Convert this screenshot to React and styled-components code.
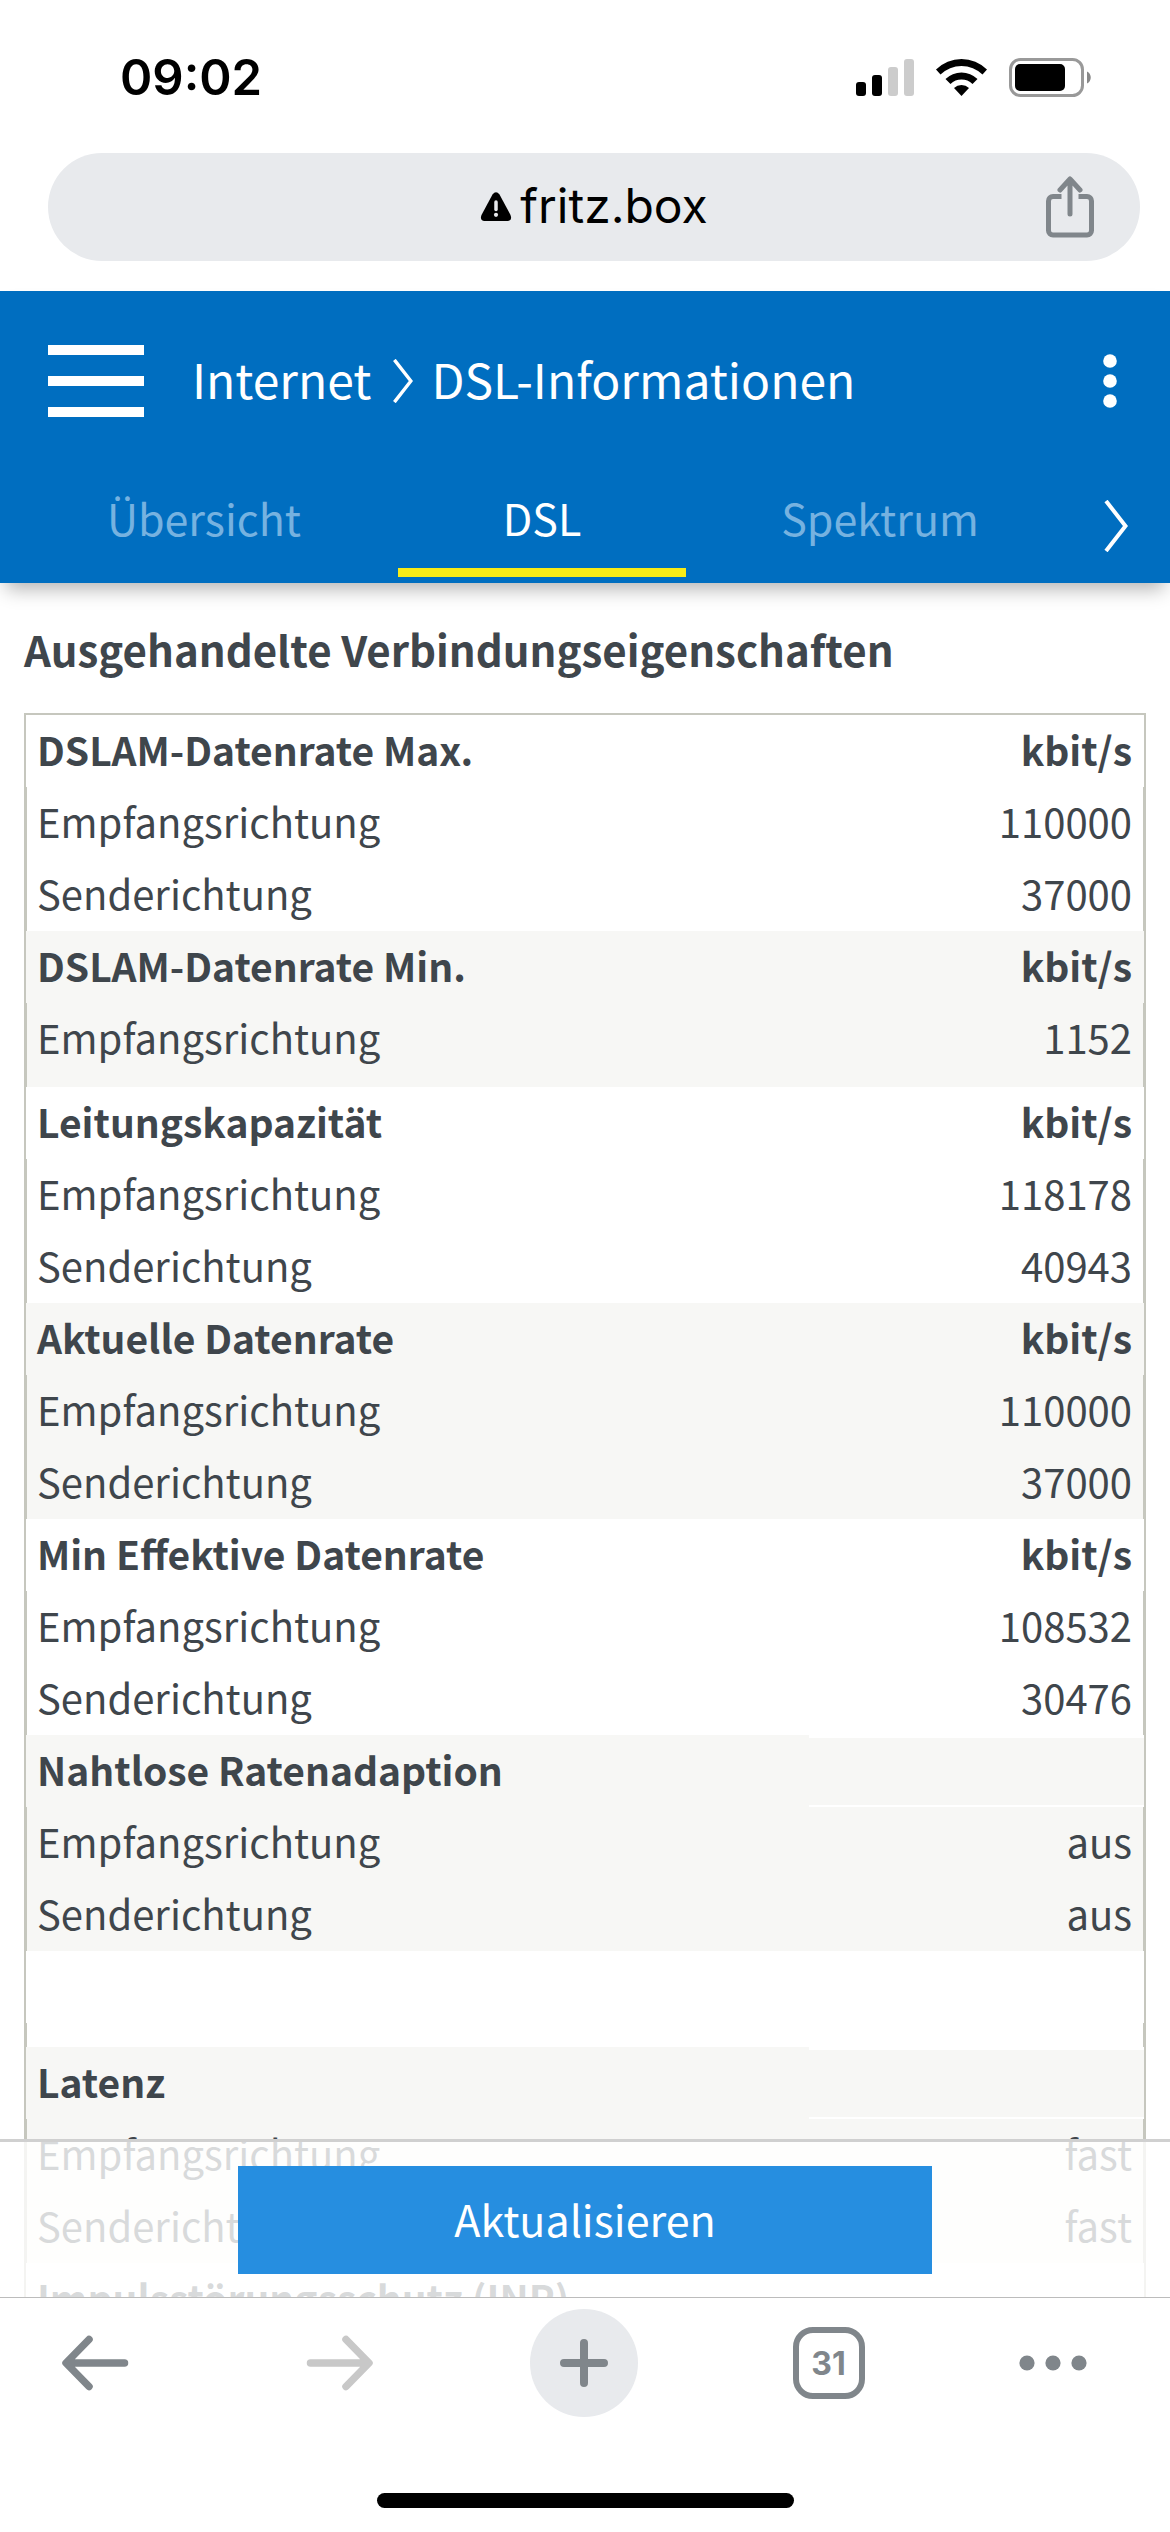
import React from "react";
import styled, { createGlobalStyle } from "styled-components";

const groups = [
	{
		title: "DSLAM-Datenrate Max.",
		unit: "kbit/s",
		rows: [
			["Empfangsrichtung", "110000"],
			["Senderichtung", "37000"],
		],
	},
	{
		title: "DSLAM-Datenrate Min.",
		unit: "kbit/s",
		shaded: true,
		rows: [["Empfangsrichtung", "1152"]],
		spaced: true,
	},
	{
		title: "Leitungskapazität",
		unit: "kbit/s",
		rows: [
			["Empfangsrichtung", "118178"],
			["Senderichtung", "40943"],
		],
	},
	{
		title: "Aktuelle Datenrate",
		unit: "kbit/s",
		shaded: true,
		rows: [
			["Empfangsrichtung", "110000"],
			["Senderichtung", "37000"],
		],
	},
	{
		title: "Min Effektive Datenrate",
		unit: "kbit/s",
		rows: [
			["Empfangsrichtung", "108532"],
			["Senderichtung", "30476"],
		],
	},
	{
		title: "Nahtlose Ratenadaption",
		shaded: true,
		rows: [
			["Empfangsrichtung", "aus"],
			["Senderichtung", "aus"],
		],
	},
	{ rows: [], divider: true },
	{
		title: "Latenz",
		shaded: true,
		rows: [
			["Empfangsrichtung", "fast"],
			["Senderichtung", "fast"],
		],
	},
	{ title: "Impulsstörungsschutz (INP)", rows: [] },
];

const StatusIcons = () => (
	<svg width="236" height="40" viewBox="0 0 236 40" aria-hidden="true">
		<rect x="0" y="24" width="10" height="14" rx="3" />
		<rect x="16" y="17" width="10" height="21" rx="3" />
		<rect x="32" y="9" width="10" height="29" rx="3" fill="#ccc" />
		<rect x="48" y="1" width="10" height="37" rx="3" fill="#ccc" />
		<path d="M80 11.5a36 36 0 0 1 51 0l-4.5 5a30 30 0 0 0-42 0z" />
		<path d="M89.500 21a23 23 0 0 1 32 0l-5 5a16 16 0 0 0-22 0z" />
		<path d="M98 30a11 11 0 0 1 15 0l-7.500 8z" />
		<rect x="154.500" y="1.500" width="72" height="36" rx="10" fill="none" stroke="#999" strokeWidth="3" />
		<rect x="159" y="6" width="50" height="27" rx="5" />
		<path d="M231 13.500c5 2 5 10 0 12z" fill="#888" />
	</svg>
);

const WarningIcon = () => (
	<svg width="32" height="29" viewBox="0 0 32 29" aria-hidden="true">
		<path d="M12.500 2.500Q16-2 19.500 2.500L30.500 23Q32.500 28.500 27.500 29H4.500Q-.5 28.500 1.500 23z" />
		<path d="M16 10v7.500" stroke="#e8eaed" strokeWidth="3.500" strokeLinecap="round" />
		<circle cx="16" cy="22.800" r="2.100" fill="#e8eaed" />
	</svg>
);

const ShareIcon = () => (
	<svg width="48" height="62" viewBox="0 0 48 62" fill="none" stroke="#80868b" strokeWidth="5" strokeLinecap="round" strokeLinejoin="round">
		<path d="M15.500 20.500H7a4.500 4.500 0 0 0-4.500 4.500v29.500A4.500 4.500 0 0 0 7 59h34a4.500 4.500 0 0 0 4.500-4.500V25a4.500 4.500 0 0 0-4.500-4.500h-8.500" strokeLinecap="butt" />
		<path d="M24 38V4M14 14 24 3l10 11" />
	</svg>
);

const Chevron = ({ height }) => (
	<svg width="24" height={height} viewBox="0 0 24 52" preserveAspectRatio="xMaxYMid meet" fill="none" stroke="#fff" strokeWidth="4" aria-hidden="true">
		<path d="M2 1 21.500 26 2 51" />
	</svg>
);

const Arrow = ({ color, flip }) => (
	<svg width="68" height="56" viewBox="0 0 68 56" fill="none" stroke={color} strokeWidth="7.500" strokeLinecap="round" strokeLinejoin="round">
		<path d={flip ? "M4.500 28h58M40 4.500 63 28 40 51.500" : "M63.500 28h-58M28 4.500 5 28l23 23.500"} />
	</svg>
);

const App = () => {
	return (
		<Page>
			<GlobalStyle />
			<StatusBar>
				<Clock>09:02</Clock>
				<StatusIcons />
			</StatusBar>
			<AddressBar>
				<Address type="button">
					<WarningIcon />
					fritz.box
				</Address>
				<ShareButton type="button" aria-label="Teilen">
					<ShareIcon />
				</ShareButton>
			</AddressBar>

			<Header>
				<TitleRow>
					<MenuButton type="button" aria-label="Menü">
						<MenuLine />
						<MenuLine />
						<MenuLine />
					</MenuButton>
					<Breadcrumb>
						<Crumb href="#internet">Internet</Crumb>
						<Chevron height="44" />
						<Crumb href="#dsl">DSL-Informationen</Crumb>
					</Breadcrumb>
					<MoreButton type="button" aria-label="Mehr">
						<svg width="14" height="54" viewBox="0 0 14 54" fill="#fff">
							<circle cx="7" cy="7" r="6.800" />
							<circle cx="7" cy="27" r="6.800" />
							<circle cx="7" cy="47" r="6.800" />
						</svg>
					</MoreButton>
				</TitleRow>
				<Tabs>
					<Tab href="#uebersicht">Übersicht</Tab>
					<Tab href="#dsl" $active>
						DSL
					</Tab>
					<Tab href="#spektrum">Spektrum</Tab>
					<NextButton type="button" aria-label="Weitere Reiter">
						<Chevron height="52" />
					</NextButton>
				</Tabs>
			</Header>

			<Content>
				<Heading>Ausgehandelte Verbindungseigenschaften</Heading>
				<Table>
					{groups.map((group, i) => (
						<Group key={i} $shaded={group.shaded}>
							<tr>
								<HeadCell scope="col">{group.title}</HeadCell>
								<HeadCell scope="col" $empty={!group.unit}>
									{group.unit}
								</HeadCell>
							</tr>
							{group.rows.map(([label, value]) => (
								<tr key={label}>
									<Cell $spaced={group.spaced}>{label}</Cell>
									<Cell $spaced={group.spaced}>{value}</Cell>
								</tr>
							))}
							{group.divider && (
								<tr>
									<DividerCell colSpan={2} />
								</tr>
							)}
						</Group>
					))}
				</Table>
				<ActionBar>
					<RefreshButton type="button">Aktualisieren</RefreshButton>
				</ActionBar>
			</Content>

			<BottomBar>
				<Tools>
					<ToolButton type="button" aria-label="Zurück">
						<Arrow color="#80868b" />
					</ToolButton>
					<ToolButton type="button" aria-label="Vorwärts">
						<Arrow color="#c8c8c8" flip />
					</ToolButton>
					<ToolButton type="button" aria-label="Neuer Tab" $filled>
						<svg width="50" height="50" viewBox="0 0 50 50" stroke="#80868b" strokeWidth="8" strokeLinecap="round">
							<path d="M5 25h40M25 5v40" />
						</svg>
					</ToolButton>
					<ToolButton type="button">
						<TabCount>31</TabCount>
					</ToolButton>
					<ToolButton type="button" aria-label="Menü" $narrow>
						<svg width="68" height="16" viewBox="0 0 68 16" fill="#80868b">
							<circle cx="8" cy="8" r="7.600" />
							<circle cx="34" cy="8" r="7.600" />
							<circle cx="60" cy="8" r="7.600" />
						</svg>
					</ToolButton>
				</Tools>
				<HomeIndicator />
			</BottomBar>
		</Page>
	);
};

export default App;

const GlobalStyle = createGlobalStyle`
	* {
		box-sizing: border-box;
	}
	body {
		margin: 0;
		background: #fff;
		color: #3f464c;
		font-family: "Noto Sans CJK SC", "Noto Sans", sans-serif;
	}
	a {
		color: inherit;
		text-decoration: none;
	}
	svg {
		display: block;
		flex: none;
	}
`;

const Button = styled.button`
	border: 0;
	padding: 0;
	background: none;
	color: inherit;
	font-family: inherit;
`;

const Page = styled.div`
	display: flex;
	flex-direction: column;
	height: 100vh;
	overflow: hidden;
`;

const StatusBar = styled.div`
	flex: none;
	display: flex;
	align-items: center;
	justify-content: space-between;
	height: 153px;
	padding: 2px 78px 0 120px;
	color: #000;
`;

const Clock = styled.span`
	font-family: Inter, sans-serif;
	font-size: 49px;
	font-weight: 600;
`;

const AddressBar = styled.div`
	flex: none;
	display: flex;
	align-items: center;
	height: 108px;
	margin: 0 30px 30px 48px;
	padding: 0 46px 0 94px;
	border-radius: 54px;
	background: #e8eaed;
	color: #000;
`;

const Address = styled(Button)`
	flex: 1;
	display: flex;
	align-items: center;
	justify-content: center;
	gap: 8px;
	padding-bottom: 2px;
	font-family: Inter, sans-serif;
	font-size: 48px;
	line-height: 60px;
`;

const ShareButton = styled(Button)`
	width: 48px;
`;

const Header = styled.header`
	flex: none;
	position: relative;
	z-index: 1;
	padding: 45px 0 6px;
	background: #006ec0;
	color: #fff;
	box-shadow: 0 12px 18px -6px rgba(0, 0, 0, 0.3);
`;

const TitleRow = styled.div`
	display: flex;
	align-items: center;
	height: 90px;
	margin-bottom: 55px;
	padding: 0 53px 0 48px;
`;

const MenuButton = styled(Button)`
	display: flex;
	flex-direction: column;
	justify-content: space-between;
	width: 96px;
	height: 72px;
	margin-right: 48px;
`;

const MenuLine = styled.span`
	height: 10px;
	width: 100%;
	background: #fff;
`;

const Breadcrumb = styled.nav`
	flex: 1;
	display: flex;
	align-items: center;
	gap: 18px;
	font-size: 48px;
`;

const Crumb = styled.a`
	line-height: 84px;
	padding-bottom: 6px;
`;

const MoreButton = styled(Button)`
	width: 14px;
`;

const Tabs = styled.nav`
	display: flex;
	gap: 50px;
	padding: 0 42px 0 60px;
`;

const Tab = styled.a`
	flex: 1;
	padding-bottom: 15px;
	border-bottom: 9px solid ${(p) => (p.$active ? "#f8ec17" : "transparent")};
	color: ${(p) => (p.$active ? "#fff" : "#76b2e0")};
	font-size: 43px;
	line-height: 72px;
	text-align: center;
`;

const NextButton = styled(Button)`
	width: 54px;
	display: flex;
	align-items: center;
	justify-content: flex-end;
	padding-bottom: 6px;
`;

const Content = styled.main`
	flex: 1;
	min-height: 0;
	position: relative;
	overflow: hidden;
	padding: 36px 24px 0;
`;

const Heading = styled.h1`
	margin: 0 0 34px;
	font-size: 42px;
	font-weight: 600;
	line-height: 60px;
`;

const Table = styled.table`
	width: 100%;
	border-spacing: 0;
	border-top: 2px solid #c6c7be;
	font-size: 40px;
	line-height: 68px;
`;

const Group = styled.tbody`
	--fill: ${(p) => (p.$shaded ? "#f7f7f5" : "#fff")};
`;

const Cell = styled.td`
	height: ${(p) => (p.$spaced ? 84 : 72)}px;
	padding: 0 0 4px;
	background: var(--fill);
	vertical-align: top;

	&:first-child {
		width: 70%;
		padding-left: 10px;
		border-left: 3px solid #c6c7be;
		text-align: left;
	}

	&:last-child {
		padding-right: 11px;
		border-right: 3px solid #c6c7be;
		text-align: right;
	}
`;

const HeadCell = styled(Cell).attrs({ as: "th" })`
	font-size: 39px;
	font-weight: 600;
	${(p) =>
		p.$empty &&
		`
		background: linear-gradient(var(--fill), var(--fill)) 0 3px / 100% 67px no-repeat;
	`}

	&:first-child {
		padding-left: 11px;
		border-left-width: 2px;
	}

	&:last-child {
		padding-right: 12px;
		border-right-width: 2px;
	}
`;

const DividerCell = styled.td`
	height: 24px;
	padding: 0;
	border: solid #c6c7be;
	border-width: 0 3px;
`;

const ActionBar = styled.div`
	position: absolute;
	left: 0;
	right: 0;
	bottom: 0;
	display: flex;
	justify-content: center;
	padding: 24px 0 23px;
	border-top: 3px solid #d0d0d0;
	background: rgba(255, 255, 255, 0.8);
`;

const RefreshButton = styled(Button)`
	width: 694px;
	max-width: 80%;
	height: 108px;
	padding-bottom: 4px;
	background: #268ee0;
	color: #fff;
	font-size: 43px;
`;

const BottomBar = styled.footer`
	flex: none;
	padding: 11px 0 24px;
	border-top: 1px solid #bcbcbc;
`;

const Tools = styled.div`
	display: flex;
	justify-content: space-between;
	padding: 0 83px 0 41px;
`;

const ToolButton = styled(Button)`
	display: flex;
	align-items: center;
	justify-content: center;
	width: ${(p) => (p.$narrow ? 68 : 108)}px;
	height: 108px;
	border-radius: 50%;
	background: ${(p) => (p.$filled ? "#e8eaed" : "none")};
`;

const TabCount = styled.span`
	width: 72px;
	height: 72px;
	border: 6px solid #80868b;
	border-radius: 20px;
	color: #80868b;
	font-family: Inter, sans-serif;
	font-size: 32px;
	font-weight: 700;
	line-height: 62px;
	text-align: center;
`;

const HomeIndicator = styled.div`
	width: 417px;
	height: 15px;
	margin: 76px auto 0;
	border-radius: 8px;
	background: #000;
`;
